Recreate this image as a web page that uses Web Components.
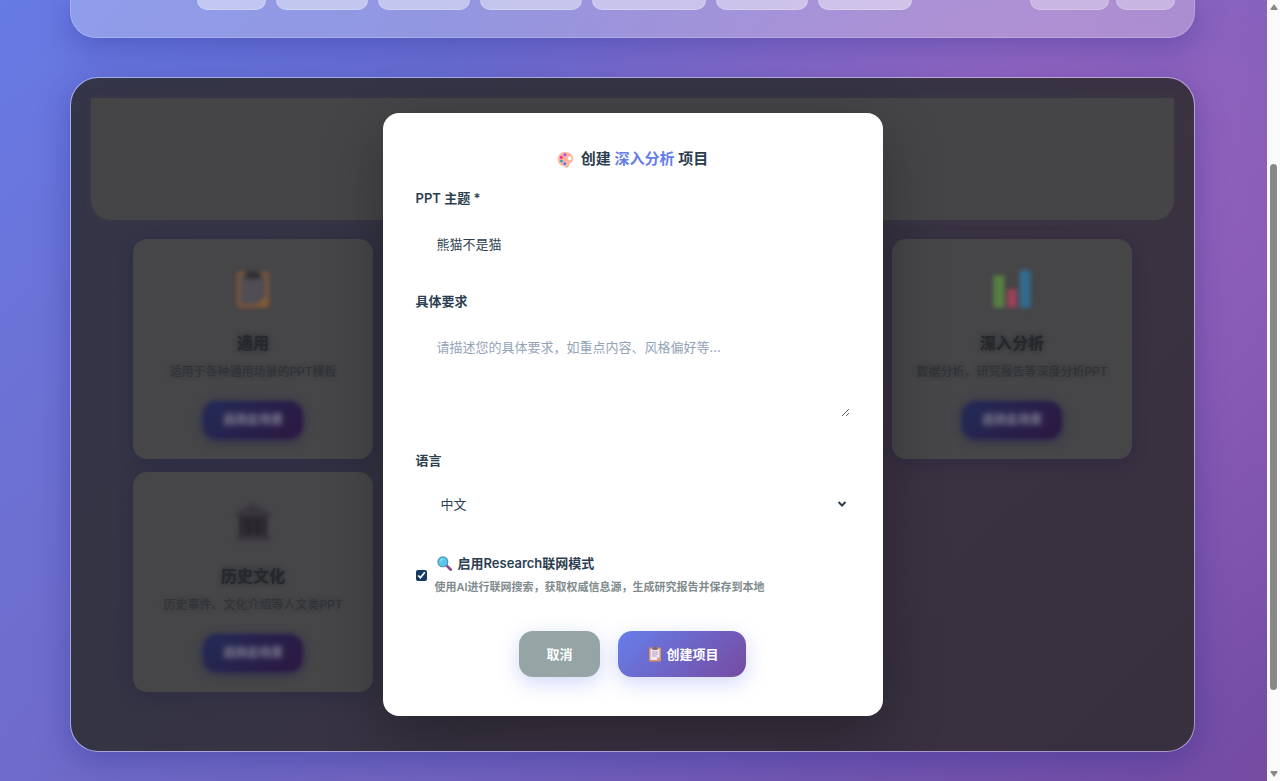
<!DOCTYPE html>
<html lang="zh-CN">
<head>
<meta charset="utf-8">
<title>创建项目</title>
<style>
  html {
    height: 100%;
    overflow: hidden;
  }

  body {
    margin: 0;
    min-height: 100%;
    font-family: Inter, "Noto Sans CJK SC", sans-serif;
    color: #2c3e50;
    background:
      radial-gradient(circle at 20% 80%, rgba(120, 119, 198, 0.3) 0%, transparent 50%),
      radial-gradient(circle at 80% 20%, rgba(255, 119, 198, 0.3) 0%, transparent 50%),
      linear-gradient(135deg, #677be5 0%, #764ba2 100%);
  }
</style>
</head>
<body>

<app-shell>
  <nav-strip></nav-strip>
  <scene-panel>
    <scene-card icon="clipboard" heading="通用">适用于各种通用场景的PPT模板</scene-card>
    <scene-card icon="chart" heading="深入分析" class="last">数据分析、研究报告等深度分析PPT</scene-card>
    <scene-card icon="museum" heading="历史文化">历史事件、文化介绍等人文类PPT</scene-card>
    <project-dialog slot="dialog"></project-dialog>
  </scene-panel>
</app-shell>

<script>
/**
 * Base class: clones the template into an open shadow root
 */

class BaseElement extends HTMLElement {
  constructor() {
    super();
    const t = document.createElement("template");
    t.innerHTML = this.template;
    this.attachShadow({ mode: "open" });
    this.shadowRoot.appendChild(t.content.cloneNode(true));
  }
}

/**
 * Icons
 */

const icons = {
  palette: `
    <path fill="#ffb3a1" d="M15.500 2C7.500 2 1.500 7.500 1.500 15.500c0 7 5 12.500 11.500 13 2 .2 2.500 1.500 4 2.500 2.500 1.600 6-.5 5.700-4-.2-2 .3-3.200 2.300-4.200 3.500-1.600 5.500-4.300 5.500-7.800C30.500 7.500 24 2 15.500 2z"/>
    <ellipse cx="24" cy="13.500" rx="3.200" ry="3.700" fill="#fff"/>
    <circle cx="15" cy="7" r="2.900" fill="#b14ce0"/>
    <circle cx="8" cy="12" r="2.900" fill="#f8318d"/>
    <circle cx="8.500" cy="19" r="2.700" fill="#26a7ae"/>
    <circle cx="14.500" cy="24" r="2.700" fill="#4a7bf0"/>`,
  search: `
    <path d="M20 20l9 9" stroke="#8b4a94" stroke-width="6" stroke-linecap="round"/>
    <circle cx="12.500" cy="12.500" r="10.500" fill="#59c8ea" stroke="#4a91b8" stroke-width="2.500"/>
    <path d="M7 11a6 6 0 0 1 6-5" stroke="#a5ebfb" stroke-width="2" fill="none" stroke-linecap="round"/>`,
  clipboard: `
    <rect x="4" y="3" width="24" height="28" rx="2" fill="#e0905f"/>
    <path fill="#f0e9f5" d="M7 6h18v17l-5 5H7z"/>
    <path fill="#b9a6cb" d="M25 23h-5v5z"/>
    <path fill="#776b86" d="M11 3h2.500a2.500 2.500 0 0 1 5 0H21v5H11z"/>
    <path stroke="#a895b8" stroke-width="1.800" d="M10 12h12M10 16h12M10 20h9"/>`,
  clipboardDim: `
    <rect x="3" y="2" width="26" height="29" rx="2" fill="#b0642c"/>
    <path fill="#5a5560" d="M6 5h20v17l-5 6H6z"/>
    <path fill="#1c1a20" d="M10 2h12v6H10z"/>
    <path fill="#c27a1c" d="M27 21v8h-8z"/>`,
  chart: `
    <rect x="1" y="5" width="9" height="26" rx="1" fill="#69b83c"/>
    <rect x="12" y="16" width="8" height="15" rx="1" fill="#e83f68"/>
    <rect x="22" y="1" width="9" height="30" rx="1" fill="#218fd1"/>`,
  museum: `
    <path fill="#2d2935" d="M16 1l14 8v3H2V9z"/>
    <path fill="#08040d" d="M5 12h22v15H5z"/>
    <path fill="#2d2935" d="M2 27h28v4H2z"/>
    <path stroke="#231e2a" stroke-width="2" d="M9 13v14M16 13v14M23 13v14"/>`,
};

class UiIcon extends BaseElement {
  static get observedAttributes() {
    return ["name"];
  }

  get template() {
    return `
    <style>
      :host {
        display: inline-block;
        width: var(--icon-size, 16px);
        height: var(--icon-size, 16px);
        flex: none;
        white-space: normal;
      }

      svg {
        display: block;
        width: 100%;
        height: 100%;
      }
    </style>
    <svg viewBox="0 0 32 32" fill="none" aria-hidden="true"></svg>
    `;
  }

  attributeChangedCallback(attr, old, name) {
    this.shadowRoot.querySelector("svg").innerHTML = icons[name] || "";
  }
}

/**
 * Page scrollbar
 */

class PageScrollbar extends BaseElement {
  get template() {
    return `
    <style>
      :host {
        display: grid;
        grid-template-rows: 14px 150fr 526fr 77fr 14px;
        justify-items: center;
        align-items: center;
        background: #fafafa;
      }

      .thumb {
        grid-row: 3;
        width: 7px;
        height: 100%;
        border-radius: 4px;
        background: #888;
      }

      .down {
        grid-row: 5;
      }
    </style>
    <svg width="8" height="8" viewBox="0 0 8 8"><path fill="#888" d="M4 1l3.500 5q.5 1-.5 1H1q-1 0-.5-1z"/></svg>
    <div class="thumb"></div>
    <svg class="down" width="8" height="8" viewBox="0 0 8 8"><path fill="#888" d="M4 7L.5 2Q0 1 1 1h6q1 0 .5 1z"/></svg>
    `;
  }
}

/**
 * Page frame: content column and scrollbar
 */

class AppShell extends BaseElement {
  get template() {
    return `
    <style>
      :host {
        display: grid;
        grid-template-columns: minmax(0, 1fr) 13px;
        height: 100vh;
      }

      main {
        display: flex;
        flex-direction: column;
        gap: 39px;
        padding: 0 72px 0 70px;
      }
    </style>
    <main><slot></slot></main>
    <page-scrollbar></page-scrollbar>
    `;
  }
}

/**
 * Lower edge of the sticky navigation
 */

class NavStrip extends BaseElement {
  get template() {
    const tabs = [69, 92, 92, 102, 114, 92, 94];
    const tools = [79, 59];
    const tab = w => `<span style="width: ${w}px"></span>`;
    return `
    <style>
      :host {
        display: flex;
        align-items: flex-start;
        box-sizing: border-box;
        height: 38px;
        flex: none;
        padding: 0 19px 0 126px;
        border: 1px solid rgba(255, 255, 255, 0.2);
        border-top: 0;
        border-radius: 0 0 26px 26px;
        background: rgba(255, 255, 255, 0.27);
        box-shadow: 0 8px 32px rgba(31, 38, 135, 0.37);
      }

      .tabs {
        display: flex;
        gap: 10px;
      }

      .tools {
        display: flex;
        gap: 7px;
        margin-left: auto;
      }

      span {
        box-sizing: border-box;
        height: 10px;
        border: 1px solid rgba(255, 255, 255, 0.2);
        border-top: 0;
        border-radius: 0 0 12px 12px;
        background: rgba(255, 255, 255, 0.45);
      }

      .tools span {
        background: rgba(255, 255, 255, 0.35);
      }
    </style>
    <div class="tabs">${tabs.map(tab).join("")}</div>
    <div class="tools">${tools.map(tab).join("")}</div>
    `;
  }
}

/**
 * Scene picker, dimmed while the dialog is open
 */

class ScenePanel extends BaseElement {
  get template() {
    return `
    <style>
      :host {
        display: block;
        position: relative;
        padding: 20px 20px 59px;
        border: 1px solid rgba(255, 255, 255, 0.4);
        border-radius: 28px;
        background: linear-gradient(135deg, #343548 0%, #353444 40%, #3b3242 65%, #37303f 100%);
        background-clip: padding-box;
        box-shadow: 0 8px 32px rgba(31, 38, 135, 0.37);
      }

      .banner {
        height: 122px;
        border-radius: 0 0 20px 20px;
        background: #454548;
        box-shadow: 0 0 8px rgba(69, 69, 72, 0.4);
      }

      .scenes {
        display: grid;
        grid-template-columns: repeat(4, 240px);
        justify-content: center;
        gap: 13px;
        margin-top: 19px;
      }

      ::slotted(.last) {
        grid-column: 4;
      }

      .overlay {
        position: absolute;
        inset: 0;
        display: flex;
        align-items: center;
        justify-content: center;
        overflow: hidden;
        border-radius: 27px;
      }
    </style>
    <div class="banner"></div>
    <div class="scenes"><slot></slot></div>
    <div class="overlay"><slot name="dialog"></slot></div>
    `;
  }
}

class SceneCard extends BaseElement {
  get template() {
    return `
    <style>
      :host {
        display: flex;
        flex-direction: column;
        align-items: center;
        box-sizing: border-box;
        height: 220px;
        padding: 30px 8px 20px;
        border-radius: 14px;
        background: #464548;
        box-shadow: 0 4px 16px rgba(30, 30, 70, 0.3);
        text-align: center;
      }

      ui-icon {
        --icon-size: 40px;
        filter: blur(2px);
        opacity: 0.5;
      }

      h3 {
        margin: 22px 0 0;
        font-size: 16px;
        line-height: 24px;
        font-weight: 700;
        color: #25282c;
        text-shadow: 0 0 5px #222528;
      }

      p {
        margin: 8px 0 0;
        font-size: 12px;
        line-height: 18px;
        color: #303337;
        text-shadow: 0 0 4px #333639;
        white-space: nowrap;
      }

      button {
        height: 38px;
        margin-top: 20px;
        padding: 0 20px;
        border: 0;
        border-radius: 14px;
        background: linear-gradient(135deg, #232b58, #2c1740);
        color: rgba(119, 117, 138, 0.5);
        font: 600 12px/18px Inter, "Noto Sans CJK SC", sans-serif;
        text-shadow: 0 0 5px #77758a;
        filter: blur(2px);
        box-shadow: 0 2px 8px #2b2d50;
      }
    </style>
    <ui-icon></ui-icon>
    <h3></h3>
    <p><slot></slot></p>
    <button type="button">选择此场景</button>
    `;
  }

  connectedCallback() {
    const name = this.getAttribute("icon");
    this.shadowRoot.querySelector("ui-icon").setAttribute("name", icons[name + "Dim"] ? name + "Dim" : name);
    this.shadowRoot.querySelector("h3").textContent = this.getAttribute("heading");
  }
}

/**
 * Create project dialog
 */

class ProjectDialog extends BaseElement {
  get template() {
    return `
    <style>
      :host {
        display: block;
        box-sizing: border-box;
        width: 500px;
        max-width: 90%;
        padding: 34px 33px 39px;
        border-radius: 16px;
        background: #fff;
        box-shadow: 0 20px 60px rgba(0, 0, 0, 0.3);
      }

      h2 {
        display: flex;
        justify-content: center;
        align-items: center;
        margin: 0 0 17px;
        font-size: 15px;
        line-height: 24px;
        font-weight: 600;
        white-space: pre;
      }

      h2 ui-icon {
        --icon-size: 17px;
        margin-right: 7px;
      }

      h2 span {
        color: #667eea;
      }

      form {
        display: flex;
        flex-direction: column;
        gap: 21px;
      }

      .field {
        display: grid;
        gap: 8px;
      }

      label {
        font-size: 13px;
        line-height: 20px;
        font-weight: 600;
      }

      input[type="text"],
      textarea,
      select {
        box-sizing: border-box;
        width: 100%;
        height: 54px;
        margin: 0;
        padding: 16px 21px;
        border: 0;
        outline: 0;
        background: transparent;
        color: #2c3e50;
        font: 400 13px/20px Inter, "Noto Sans CJK SC", sans-serif;
      }

      textarea {
        display: block;
        height: 98px;
        margin-bottom: 12px;
        padding: 18px 21px;
        resize: vertical;
      }

      ::placeholder {
        color: #94a3b8;
      }

      .select {
        display: grid;
        align-items: center;
      }

      .select > * {
        grid-area: 1 / 1;
      }

      select {
        height: 52px;
        padding: 15px 25px;
        appearance: none;
      }

      .select svg {
        justify-self: end;
        margin-right: 3px;
        pointer-events: none;
      }

      .research {
        display: flex;
        align-items: center;
        gap: 8px;
        line-height: 24px;
      }

      .research input {
        width: 11px;
        height: 11px;
        margin: 0;
        flex: none;
        accent-color: #173a64;
      }

      .research strong {
        display: flex;
        align-items: center;
        font-weight: 600;
      }

      .research strong ui-icon {
        --icon-size: 15px;
        margin: 0 6px 0 2px;
      }

      small {
        display: block;
        font-size: 11px;
        color: #7f8c8d;
      }

      .actions {
        display: flex;
        justify-content: center;
        gap: 18px;
        margin-top: 11px;
      }

      button {
        display: flex;
        align-items: center;
        height: 46px;
        padding: 0 27px;
        border: 0;
        border-radius: 14px;
        color: #fff;
        font: 700 13px/20px Inter, "Noto Sans CJK SC", sans-serif;
        background: linear-gradient(135deg, #667eea 0%, #764ba2 100%);
        box-shadow: 0 6px 20px rgba(102, 126, 234, 0.3);
      }

      button.cancel {
        background: #95a5a6;
      }

      button ui-icon {
        --icon-size: 16px;
        margin: 0 4px 0 2px;
      }
    </style>

    <h2><ui-icon name="palette"></ui-icon>创建 <span>深入分析</span> 项目</h2>
    <form>
      <div class="field">
        <label for="topic">PPT 主题 *</label>
        <input id="topic" type="text" value="熊猫不是猫">
      </div>
      <div class="field">
        <label for="requirements">具体要求</label>
        <textarea id="requirements" placeholder="请描述您的具体要求，如重点内容、风格偏好等..."></textarea>
      </div>
      <div class="field">
        <label for="language">语言</label>
        <div class="select">
          <select id="language"><option>中文</option></select>
          <svg width="10" height="8" viewBox="0 0 10 8"><path d="M1.500 2L5 5.500 8.500 2" fill="none" stroke="#2c3e50" stroke-width="2"/></svg>
        </div>
      </div>
      <label class="research" for="research">
        <input id="research" type="checkbox" checked>
        <span>
          <strong><ui-icon name="search"></ui-icon>启用Research联网模式</strong>
          <small>使用AI进行联网搜索，获取权威信息源，生成研究报告并保存到本地</small>
        </span>
      </label>
      <div class="actions">
        <button class="cancel" type="button">取消</button>
        <button type="button"><ui-icon name="clipboard"></ui-icon>创建项目</button>
      </div>
    </form>
    `;
  }
}

// Register the elements
customElements.define("ui-icon", UiIcon);
customElements.define("page-scrollbar", PageScrollbar);
customElements.define("app-shell", AppShell);
customElements.define("nav-strip", NavStrip);
customElements.define("scene-card", SceneCard);
customElements.define("project-dialog", ProjectDialog);
customElements.define("scene-panel", ScenePanel);
</script>
</body>
</html>
